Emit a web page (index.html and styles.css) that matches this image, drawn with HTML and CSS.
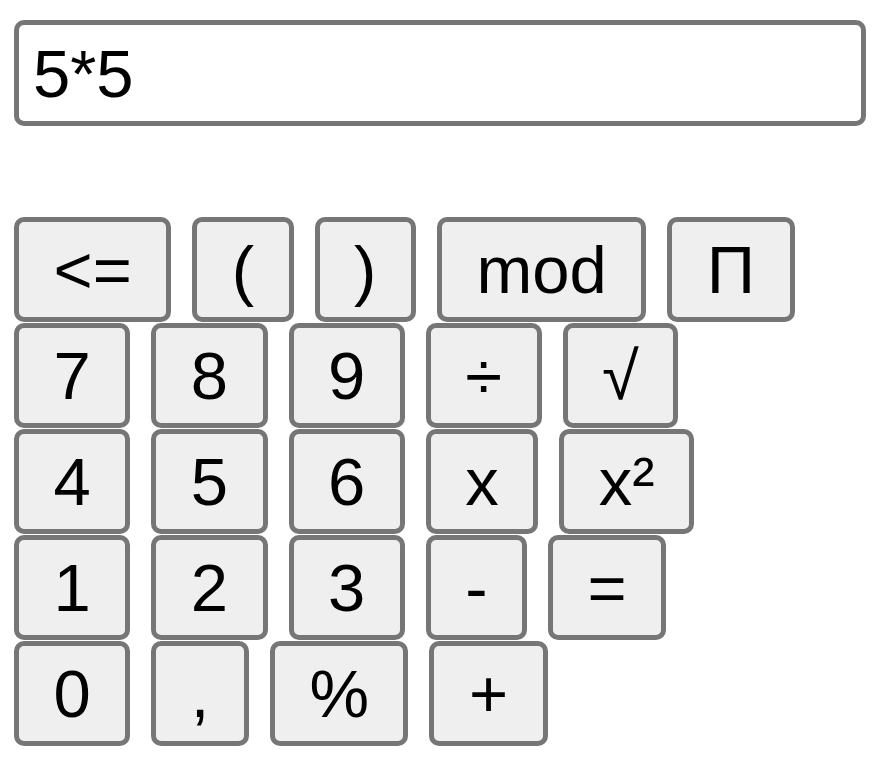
FILE: index.html
```html
<!DOCTYPE html>
<html lang="en">
<head>
    <meta charset="UTF-8">
    <meta name="viewport" content="width=device-width, initial-scale=1.0">
    <title>Calculator</title>
    <link rel="stylesheet" href="styles.css">
</head>
<body>

    <div class="calc">
        <input type="text" class="display" id="display" value="5*5">

        <div class="keys">
            <div class="row">
                <button class="key">&lt;=</button>
                <button class="key">(</button>
                <button class="key">)</button>
                <button class="key">mod</button>
                <button class="key">&Pi;</button>
            </div>
            <div class="row">
                <button class="key">7</button>
                <button class="key">8</button>
                <button class="key">9</button>
                <button class="key">&divide;</button>
                <button class="key">&radic;</button>
            </div>
            <div class="row">
                <button class="key">4</button>
                <button class="key">5</button>
                <button class="key">6</button>
                <button class="key">x</button>
                <button class="key">x&sup2;</button>
            </div>
            <div class="row">
                <button class="key">1</button>
                <button class="key">2</button>
                <button class="key">3</button>
                <button class="key">-</button>
                <button class="key">=</button>
            </div>
            <div class="row">
                <button class="key">0</button>
                <button class="key">,</button>
                <button class="key">%</button>
                <button class="key">+</button>
            </div>
        </div>
    </div>

</body>
</html>
```

FILE: styles.css
```css
body {
    margin: 0;
    font-family: "Liberation Sans", Arial, sans-serif;
    background-color: #fff;
}
.calc {
    padding: 20px 8px 0 14px;
}
.display {
    display: block;
    box-sizing: border-box;
    width: 852px;
    height: 106px;
    margin: 0;
    padding: 0 14px;
    font-family: "Liberation Sans", Arial, sans-serif;
    font-size: 67px;
    color: #000;
    background-color: #fff;
    border: 5px solid #767676;
    border-radius: 10px;
    outline: none;
}
.keys {
    display: flex;
    flex-direction: column;
    gap: 1px;
    margin-top: 91px;
}
.row {
    display: flex;
    gap: 21px;
}
.key {
    box-sizing: border-box;
    height: 105px;
    margin: 0;
    padding: 0 34.5px;
    font-family: "Liberation Sans", Arial, sans-serif;
    font-size: 67px;
    line-height: normal;
    color: #000;
    background-color: #efefef;
    border: 5px solid #767676;
    border-radius: 10px;
    cursor: pointer;
}
```
